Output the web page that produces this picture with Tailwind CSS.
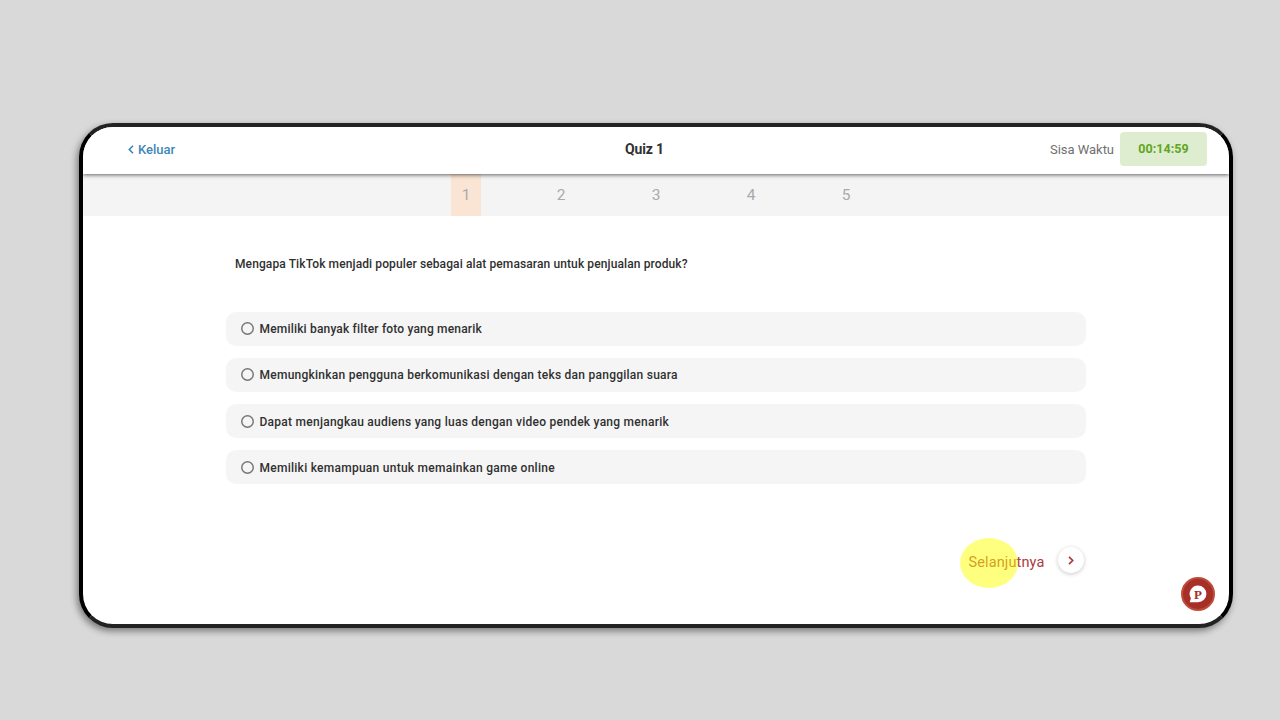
<!DOCTYPE html>
<html lang="id">
<head>
<meta charset="utf-8">
<title>Quiz 1</title>
<script src="https://cdn.jsdelivr.net/npm/@tailwindcss/browser@4"></script>
</head>
<body class="w-[1280px] h-[720px] overflow-hidden bg-[#d9d9d9] pt-[123px] pl-[79px] font-['Roboto',sans-serif] text-[#303030]">
<div class="relative w-[1154px] h-[505px] rounded-[34px] border-4 border-t-[#222] border-b-[#222] border-x-black bg-white shadow-[-2px_3px_7px_rgba(0,0,0,0.45)]">
  <div class="w-full h-full overflow-hidden rounded-[30px] flex flex-col">
    <header class="relative z-10 h-[47px] shrink-0 bg-white flex items-center pr-[22px] pb-[3px] shadow-[0_1px_4px_rgba(0,0,0,0.6)]">
      <a class="w-[542px] pl-[45px] flex items-center gap-[4px] pt-px text-[13px] font-medium text-[#3f87b5]">
        <svg class="w-[6px] h-[9px]" viewBox="0 0 6 9" fill="none" stroke="currentColor" stroke-width="1.6"><path d="M5 .8 1.3 4.5 5 8.2"/></svg>
        <span class="-tracking-[0.02px]">Keluar</span>
      </a>
      <h1 class="pt-px text-[14px] font-bold whitespace-nowrap -tracking-[0.15px]">Quiz 1</h1>
      <div class="ml-auto flex items-center gap-[6px]">
        <span class="pt-px text-[13px] text-[#707070] -tracking-[0.03px] whitespace-nowrap">Sisa Waktu</span>
        <span class="w-[87px] h-[34px] pt-px rounded-[4px] bg-[#deedd0] text-[#62a51e] text-[12.5px] font-bold flex items-center justify-center tracking-[0.08px]">00:14:59</span>
      </div>
    </header>
    <nav class="h-[42px] shrink-0 bg-[#f4f4f4] pl-[368px] flex gap-[65px] text-[15.5px] text-[#aaa]">
      <span class="w-[30px] pt-px bg-[#fae4d3] flex items-center justify-center">1</span>
      <span class="w-[30px] pt-px flex items-center justify-center">2</span>
      <span class="w-[30px] pt-px flex items-center justify-center">3</span>
      <span class="w-[30px] pt-px flex items-center justify-center">4</span>
      <span class="w-[30px] pt-px flex items-center justify-center">5</span>
    </nav>
    <main class="pt-[39px] pl-[143px] text-[12px] font-medium">
      <p class="pl-[9px] h-[18px] leading-[18px] whitespace-nowrap"><span class="tracking-[0.11px]">Mengapa TikTok menjadi populer sebagai alat pemasaran untuk penjualan produk?</span></p>
      <div class="mt-[38.5px] w-[860px] flex flex-col gap-[12.3px]">
        <label class="h-[34px] rounded-[10px] bg-[#f5f5f5] pl-[15px] flex items-center gap-[5.5px]"><i class="w-[13px] h-[13px] rounded-full shadow-[inset_0_0_0_1.5px_#777]"></i><span class="pt-px tracking-[0.18px]">Memiliki banyak filter foto yang menarik</span></label>
        <label class="h-[34px] rounded-[10px] bg-[#f5f5f5] pl-[15px] flex items-center gap-[5.5px]"><i class="w-[13px] h-[13px] rounded-full shadow-[inset_0_0_0_1.5px_#777]"></i><span class="pt-px tracking-[0.25px]">Memungkinkan pengguna berkomunikasi dengan teks dan panggilan suara</span></label>
        <label class="h-[34px] rounded-[10px] bg-[#f5f5f5] pl-[15px] flex items-center gap-[5.5px]"><i class="w-[13px] h-[13px] rounded-full shadow-[inset_0_0_0_1.5px_#777]"></i><span class="pt-px tracking-[0.26px]">Dapat menjangkau audiens yang luas dengan video pendek yang menarik</span></label>
        <label class="h-[34px] rounded-[10px] bg-[#f5f5f5] pl-[15px] flex items-center gap-[5.5px]"><i class="w-[13px] h-[13px] rounded-full shadow-[inset_0_0_0_1.5px_#777]"></i><span class="pt-px tracking-[0.26px]">Memiliki kemampuan untuk memainkan game online</span></label>
      </div>
      <div class="mt-[63px] w-[857.5px] flex justify-end items-start gap-[13px]">
        <span class="relative mt-[4.5px] text-[14.5px] leading-[22px] font-normal text-[#aa3c3c] tracking-[0.13px]">Selanjutnya
          <i class="absolute -left-[8px] -top-[13.5px] w-[58px] h-[50px] rounded-[50%] bg-[#ffff00]/50"></i>
        </span>
        <button class="w-[26px] h-[26px] rounded-full bg-white shadow-[0_1px_4px_rgba(0,0,0,0.22)] flex items-center justify-center text-[#aa3c3c]">
          <svg class="w-[6px] h-[9px]" viewBox="0 0 6 9" fill="none" stroke="currentColor" stroke-width="1.7"><path d="M1 .8 4.7 4.5 1 8.2"/></svg>
        </button>
      </div>
    </main>
  </div>
  <button class="absolute right-[14px] bottom-[13px] w-[34px] h-[34px] rounded-full bg-[#a72f27] border-2 border-[#bd4d3b] flex items-center justify-center">
    <span class="relative w-[18px] h-[18px] flex items-center justify-center">
      <svg class="absolute inset-0 w-[18px] h-[18px]" viewBox="0 0 18 18" fill="#fff"><path d="M9 .5a8.4 8.4 0 1 1 0 16.8H.7l1.2-4A8.4 8.4 0 0 1 9 .5Z"/></svg>
      <b class="relative font-['Liberation_Serif',serif] text-[13px] leading-none text-[#a72f27]">P</b>
    </span>
  </button>
</div>
</body>
</html>
